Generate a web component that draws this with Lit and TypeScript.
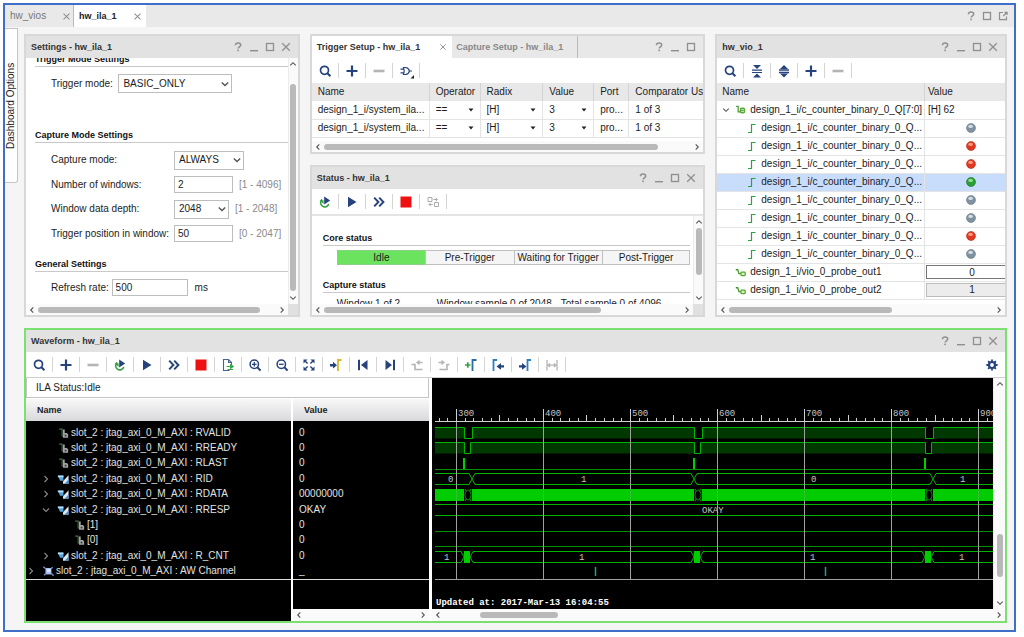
import { LitElement, html, svg, css, nothing, TemplateResult } from "lit";
import { customElement, state } from "lit/decorators.js";
import { classMap } from "lit/directives/class-map.js";

type Glyph = ReturnType<typeof svg>;

const NAVY = "#27437d";
const GREY = "#8f8f8f";
const PALE = "#b4b4b4";

const GLYPHS: Record<string, Glyph> = {
  help: svg`<path d="M4.4 5.2C4.4 3.7 5.5 3 7 3s2.7.8 2.7 2.1c0 1.7-2.6 1.7-2.6 3.5" fill="none" stroke=${GREY} stroke-width="1.5"/><rect x="6.3" y="9.6" width="1.6" height="1.6" fill=${GREY}/>`,
  min: svg`<rect x="3" y="10" width="8" height="1.4" fill=${GREY}/>`,
  max: svg`<rect x="3.5" y="3.5" width="7" height="7" fill="none" stroke=${GREY} stroke-width="1.3"/>`,
  close: svg`<path d="M3.2 3.2l7.6 7.6M10.8 3.2l-7.6 7.6" stroke=${GREY} stroke-width="1.3"/>`,
  float: svg`<path d="M7 3.5H3.5v7.2h7V7.5M8.5 3.3h2.6v2.6M11 3.3L7.2 7" fill="none" stroke=${GREY} stroke-width="1.2"/>`,
  search: svg`<circle cx="6.5" cy="6.3" r="4" fill="none" stroke=${NAVY} stroke-width="1.7"/><path d="M9.4 9.2l3 3" stroke=${NAVY} stroke-width="2"/>`,
  plus: svg`<path d="M7 1.5v11M1.5 7h11" stroke=${NAVY} stroke-width="2.2"/>`,
  minus: svg`<path d="M1.5 7h11" stroke=${PALE} stroke-width="2.6"/>`,
  gate: svg`<path d="M4.5 3.5h2.2c2.2.2 3.3 1.7 3.8 3.5-.5 1.8-1.6 3.3-3.8 3.5H4.5c1-2.4 1-4.6 0-7zM1.5 5.2h3M1.5 8.8h3M10.5 7H13" fill="none" stroke=${NAVY} stroke-width="1.2"/><path d="M15 11v3.5h-3.5z" fill="#222"/>`,
  rerun: svg`<path d="M4.2 4.4A4.2 4.2 0 1 0 10.8 9" fill="none" stroke="#34a344" stroke-width="1.6"/><path d="M1.6 5.2h4V9z" fill="#34a344"/><path d="M6.2 1.6l6 4-6 4z" fill=${NAVY}/>`,
  play: svg`<path d="M3 1.8L11.5 7 3 12.2z" fill=${NAVY}/>`,
  fast: svg`<path d="M2.2 2.6L6.4 7l-4.2 4.4M7.2 2.6L11.4 7l-4.2 4.4" fill="none" stroke=${NAVY} stroke-width="2"/>`,
  stop: svg`<rect x="1.5" y="1.5" width="11" height="11" fill="#ee1111"/>`,
  swap: svg`<path d="M2 2.5h4v4H2zM8.5 7.5h4v4h-4zM7.5 4.5h3.8M9.8 2.8l1.6 1.7-1.6 1.7M6.8 9.5H3M4.6 7.8L3 9.5l1.6 1.7" fill="none" stroke="#ababab"/>`,
  exporter: svg`<path d="M8.5 12.5H2.5v-11h5l3 3V7M7.5 1.5v3h3" fill="none" stroke="#4a6290" stroke-width="1.1"/><path d="M5.5 8.5h4.5M9.5 6.5l3 2-3 2zM12 11.5H6.5" fill="#34a344" stroke="#34a344"/>`,
  zoomIn: svg`<circle cx="6.3" cy="6.3" r="4.2" fill="none" stroke=${NAVY} stroke-width="1.5"/><path d="M9.3 9.3l3.3 3.3" stroke=${NAVY} stroke-width="2"/><path d="M4 6.3h4.6M6.3 4v4.6" stroke=${NAVY} stroke-width="1.3"/>`,
  zoomOut: svg`<circle cx="6.3" cy="6.3" r="4.2" fill="none" stroke=${NAVY} stroke-width="1.5"/><path d="M9.3 9.3l3.3 3.3" stroke=${NAVY} stroke-width="2"/><path d="M4 6.3h4.6" stroke=${NAVY} stroke-width="1.3"/>`,
  fit: svg`<path d="M1.5 1.5h4L1.5 5.5zM12.5 1.5v4L8.5 1.5zM1.5 12.5v-4l4 4zM12.5 12.5h-4l4-4z" fill=${NAVY}/><path d="M3 3l2.6 2.6M11 3L8.4 5.6M3 11l2.6-2.6M11 11L8.4 8.4" stroke=${NAVY} stroke-width="1.4"/>`,
  toCursor: svg`<path d="M1 6h3V3.8L8 7.2l-4 3.4V8.4H1z" fill=${NAVY}/><path d="M9 13V2h3.5" fill="none" stroke="#d9b52c" stroke-width="1.8"/>`,
  first: svg`<path d="M3 1.8v10.4" stroke=${NAVY} stroke-width="2"/><path d="M11.5 2v10L5 7z" fill=${NAVY}/>`,
  last: svg`<path d="M11 1.8v10.4" stroke=${NAVY} stroke-width="2"/><path d="M2.5 2v10L9 7z" fill=${NAVY}/>`,
  prevEdge: svg`<path d="M1.5 6.5h3.5v5h7.5" fill="none" stroke=${PALE} stroke-width="1.6"/><path d="M12.5 5.3H9.5V7.3L6 4.5l3.5-2.8v2h3z" fill=${PALE}/>`,
  nextEdge: svg`<path d="M12.5 6.5h-2.5v5H2.5" fill="none" stroke=${PALE} stroke-width="1.6"/><path d="M1.5 5.3h3V7.3L8 4.5 4.5 1.7v2h-3z" fill=${PALE}/>`,
  addMarker: svg`<path d="M1 7h5.5M3.8 4.2v5.6" stroke="#34a344" stroke-width="1.7"/><path d="M8.5 13V2H12.5" fill="none" stroke="#2d6aa8" stroke-width="1.8"/>`,
  prevMarker: svg`<path d="M2.5 13V2H6" fill="none" stroke="#2d7fc0" stroke-width="1.8"/><path d="M13 7.2h-3V5L5.5 8.4l4.5 3.4V9.6h3z" fill=${NAVY}/>`,
  nextMarker: svg`<path d="M9.5 13V2H13" fill="none" stroke="#2d7fc0" stroke-width="1.8"/><path d="M1 7.2h3V5l4.5 3.4L4 11.8V9.6H1z" fill=${NAVY}/>`,
  span: svg`<path d="M2 2v10.5M12 2v10.5M3 7.2h8M5 5.4L3.2 7.2 5 9M9 5.4l1.8 1.8L9 9" fill="none" stroke=${PALE} stroke-width="1.3"/>`,
  collapse: svg`<path d="M2 6.2h10M2 8.5h10" stroke=${NAVY} stroke-width="1.2"/><path d="M3 1h8L7 5zM3 13.5h8l-4-4z" fill=${NAVY}/>`,
  expand: svg`<path d="M2 6h10M2 8.5h10" stroke=${NAVY} stroke-width="1.5"/><path d="M3 5h8L7 1zM3 9.5h8l-4 4z" fill=${NAVY}/>`,
  gear: svg`<circle cx="7" cy="7" r="3" fill="none" stroke=${NAVY} stroke-width="2.2"/><path d="M7 1.4v2.2M7 10.4v2.2M1.4 7h2.2M10.4 7h2.2M3.1 3.1l1.5 1.5M9.4 9.4l1.5 1.5M10.9 3.1L9.4 4.6M4.6 9.4l-1.5 1.5" stroke=${NAVY} stroke-width="1.8"/>`,
  up: svg`<path d="M3.8 8.5L7 5.5l3.2 3" fill="none" stroke="#555" stroke-width="1.3"/>`,
  down: svg`<path d="M3.8 5.5L7 8.5l3.2-3" fill="none" stroke="#555" stroke-width="1.3"/>`,
  left: svg`<path d="M8.5 3.8L5.5 7l3 3.2" fill="none" stroke="#555" stroke-width="1.3"/>`,
  right: svg`<path d="M5.5 3.8L8.5 7l-3 3.2" fill="none" stroke="#555" stroke-width="1.3"/>`,
  treeRight: svg`<path d="M5.5 4L8.5 7l-3 3" fill="none" stroke="#8a8a8a" stroke-width="1.1"/>`,
  treeDown: svg`<path d="M4 5.5L7 8.5l3-3" fill="none" stroke="#8a8a8a" stroke-width="1.1"/>`,
  comboArrow: svg`<path d="M3.8 5.4L7 8.5l3.2-3.1" fill="none" stroke="#555" stroke-width="1.4"/>`,
  cellArrow: svg`<path d="M4.5 5.6h5L7 8.4z" fill="#222"/>`,
  edge: svg`<path d="M3 11.5H6.5V3.5H10.5" fill="none" stroke="#2fa043" stroke-width="1.2"/>`,
  busOut: svg`<path d="M1.5 3h2.5v7h3.5" fill="none" stroke="#3f9a2c" stroke-width="1.5"/><rect x="6" y="4.5" width="7" height="7.5" rx="2.5" fill="#5aa838"/><path d="M8 7.2h3.5M8 9.6h3.5" stroke="#dff2d2" stroke-width="1.1"/>`,
  netOut: svg`<path d="M1 3.5h2.5l1.5 5h3" fill="none" stroke="#3f9a2c" stroke-width="1.6"/><rect x="7.5" y="6.5" width="5.5" height="4.5" rx="1" fill="#d9f0c8" stroke="#5aa52f" stroke-width="1.6"/>`,
  waveNet: svg`<path d="M2.5 2.5h3.5v8H8" fill="none" stroke="#4c6a4c" stroke-width="1.3"/><path d="M7 3h2v4h2.5l1.5 1.5V12.5H7z" fill="#a2a2a2"/><path d="M9 9h2v2H9z" fill="#3a3a3a"/>`,
  waveBus: svg`<path d="M1 3h6.5v6H3.5z" fill="#56a3dc"/><path d="M1 3h6.5v2H1z" fill="#b7def6"/><path d="M7 9.5l6.5-7V12.5H7z" fill="#d8e8f4"/><path d="M9 12.5l4.5-5v5z" fill="#3f88c5"/>`,
  waveGroup: svg`<path d="M4 3.5h7v7.5H4z" fill="#a9bdf0"/><path d="M1.5 2l2.5 2M12.5 2.5L11 4M2.5 12L4 10.5M11 10l2.5 2.5" stroke="#7c92d0" stroke-width="1.6"/><path d="M6 5h4v3H6z" fill="#dfe7ff"/>`,
};

const icon = (name: string) =>
  html`<svg class="icon" viewBox="0 0 14 14" aria-hidden="true">${GLYPHS[name]}</svg>`;

const windowButtons = (names: string[]) => html`
  <span class="winbtns">
    ${names.map((n) => html`<button class="winbtn" aria-label=${n}>${icon(n)}</button>`)}
  </span>
`;

const toolbar = (names: string[], end: string | null = null) => html`
  <div class="toolbar">
    ${names.map((n) => html`<button class="tool" aria-label=${n}>${icon(n)}</button>`)}
    ${end ? html`<button class="tool end" aria-label=${end}>${icon(end)}</button>` : nothing}
  </div>
`;

/** A scroll bar whose thumb is given as three proportions: before, thumb, after. */
const scrollbar = (dir: "h" | "v", parts: [number, number, number] | null) => html`
  <div class=${classMap({ bar: true, [dir]: true })}>
    ${icon(dir === "h" ? "left" : "up")}
    <div class="track">
      ${parts
        ? html`<span style="flex:${parts[0]}"></span><span class="thumb" style="flex:${parts[1]}"></span
            ><span style="flex:${parts[2]}"></span>`
        : nothing}
    </div>
    ${icon(dir === "h" ? "right" : "down")}
  </div>
`;

const PANEL_BUTTONS = ["help", "min", "max", "close"];

interface Signal {
  name: string;
  value: string;
  icon: string;
  level: "group" | "signal" | "bit";
  open?: boolean;
}

const PREFIX = "slot_2 : jtag_axi_0_M_AXI : ";
const SIGNALS: Signal[] = [
  { name: PREFIX + "RVALID", value: "0", icon: "waveNet", level: "signal" },
  { name: PREFIX + "RREADY", value: "0", icon: "waveNet", level: "signal" },
  { name: PREFIX + "RLAST", value: "0", icon: "waveNet", level: "signal" },
  { name: PREFIX + "RID", value: "0", icon: "waveBus", level: "signal", open: false },
  { name: PREFIX + "RDATA", value: "00000000", icon: "waveBus", level: "signal", open: false },
  { name: PREFIX + "RRESP", value: "OKAY", icon: "waveBus", level: "signal", open: true },
  { name: "[1]", value: "0", icon: "waveNet", level: "bit" },
  { name: "[0]", value: "0", icon: "waveNet", level: "bit" },
  { name: PREFIX + "R_CNT", value: "0", icon: "waveBus", level: "signal", open: false },
  { name: PREFIX + "AW Channel", value: "_", icon: "waveGroup", level: "group", open: false },
];

const LEDS = ["grey", "red", "red", "green", "grey", "grey", "red", "grey"];
const LED_COLOURS: Record<string, string[]> = {
  grey: ["#d3dde4", "#7e919f", "#6b7d8b"],
  red: ["#ff9a80", "#e03820", "#b83020"],
  green: ["#8be08b", "#28a035", "#187024"],
};

const led = (c: string) => html`
  <svg class="led" viewBox="0 0 10 10" role="img" aria-label=${c}>
    <circle cx="5" cy="5" r="4.5" fill=${LED_COLOURS[c][1]} stroke=${LED_COLOURS[c][2]} stroke-width=".6" />
    <ellipse cx="4.6" cy="3.4" rx="2.3" ry="1.6" fill=${LED_COLOURS[c][0]} />
  </svg>
`;

const END = 2400;
const BURSTS = [32, 262, 493];

const digital = (y: number, gap: number) => {
  let line = `M3 ${y}`;
  for (const b of BURSTS) line += `H${b + 0.5}V${y + 11}H${b + gap + 0.5}V${y}`;
  line += `H${END}`;
  return svg`<path d="${line}V${y + 11}H3Z" fill="#003800"/><path d=${line} fill="none" class="sig"/>
    ${BURSTS.map((b) => svg`<rect x=${b + 1} y=${y} width=${gap - 1} height="10" fill="#000"/>`)}`;
};

const waveform = () => svg`
  <path class="axis" d="M3 43.5H${END}"/>
  ${Array.from({ length: 80 }, (_, i) => {
    const x = Math.round(6.6 + i * 8.7) + 0.5;
    const rest = (i + 8) % 10;
    const len = rest === 0 ? 12 : rest === 5 ? 6 : 3;
    return svg`<path class="axis" d="M${x} ${43 - len}V43"/>`;
  })}
  ${digital(49.5, 8)}
  ${digital(64.5, 6)}
  <path class="sig dim" d="M3 91.5H${END}"/>
  ${BURSTS.map((b) => svg`<path class="sig pulse" d="M${b} 80V91"/>`)}
  <path class="sig" d="M3 95.5H37L43 106.5H259L265 95.5H498L504 106.5H${END}M3 106.5H37L43 95.5H259L265 106.5H498L504 95.5H${END}"/>
  <path class="sig" d="M3 126.5H${END}M3 137.5H${END}"/>
  <path class="sig dim" d="M3 153.5H${END}M3 168.5H${END}"/>
  <path class="sig" d="M3 173.5H${END}M3 184.5H${END}"/>
  ${BURSTS.map(
    (b) => svg`<rect x=${b - 4} y="173" width="15" height="12" fill="#000"/>
      <path class="sig" d="M${b - 4} 173.5h1l3 5.5l-3 5.5h-1M${b + 11} 173.5h-2l-3 5.5l3 5.5h2"/>
      <rect x=${b} y="173" width="6" height="12" fill="#00cc00"/>`
  )}
  <path d="M163.5 189V198M393.5 189V198" stroke="#2a9a8c" stroke-width="1.5"/>
  ${Array.from({ length: 8 }, (_, i) => svg`<path class="guide" d="M${24.5 + i * 87} 44V201"/>`)}
  <path class="guide" d="M3 201.5H${END}"/>
  <rect x="3" y="111" width=${END} height="12" fill="#00cc00"/>
  ${Array.from({ length: 8 }, (_, i) => svg`<path class="guide faint" d="M${24.5 + i * 87} 111V123"/>`)}
  ${BURSTS.map(
    (b) => svg`<rect x=${b} y="111" width="8" height="12" fill="#000"/>
      <path class="sig" d="M${b + 1} 111L${b + 2.5} 113.5M${b + 7} 111L${b + 5.5} 113.5M${b + 1} 123L${b + 2.5} 120.5M${b + 7} 123L${b + 5.5} 120.5"/>
      <ellipse class="sig dim" cx=${b + 4} cy="117" rx="3" ry="5"/>`
  )}
  ${Array.from({ length: 8 }, (_, i) => svg`<text x=${26 + i * 87} y="38">${300 + i * 100}</text>`)}
  <text x="16" y="104">0</text><text x="149" y="104">1</text><text x="379" y="104">0</text><text x="528" y="104">1</text>
  <text x="270" y="135">OKAY</text>
  <text x="12" y="182">1</text><text x="147" y="182">1</text><text x="378" y="182">1</text><text x="527" y="182">1</text>
  <text x="4" y="227" class="note">Updated at: 2017-Mar-13 16:04:55</text>
`;

@customElement("app-root")
export class AppRoot extends LitElement {
  @state() private selected = 3;

  static styles = css`
    :host {
      display: flex;
      box-sizing: border-box;
      min-height: 100vh;
      padding: 3px 8px 5px 3px;
      background: #fff;
      color: #1c1c1c;
      font: 10px/12px "Liberation Sans", Arial, sans-serif;
    }
    * { box-sizing: border-box; }
    button, input, select { font: inherit; color: inherit; margin: 0; border-radius: 0; }
    button { border: 0; padding: 0; background: none; }
    select { appearance: none; }
    .icon { width: 14px; height: 14px; display: block; flex: none; overflow: visible; }
    .frame {
      flex: 1; min-width: 0; display: flex; flex-direction: column;
      border: 2px solid #3f6fc8; background: #f5f5f5;
    }
    .tabs { display: flex; height: 22px; background: #e9e9e9; padding-right: 3px; align-items: stretch; }
    .tab {
      display: flex; align-items: center; justify-content: space-between;
      width: 68px; padding: 0 1px 0 5px; color: #777;
    }
    .tab.on { width: 73px; padding-right: 3px; background: #fff; color: #222; border-left: 1px solid #bbb; }
    .tab .icon { width: 11px; height: 11px; }
    .bold { font-weight: bold; font-size: 9px; }
    .winbtns { display: flex; margin-left: auto; align-items: center; }
    .winbtn { width: 16px; display: flex; justify-content: center; }
    .main { flex: 1; display: flex; gap: 6px; padding-right: 7px; min-height: 0; }
    .side {
      width: 13px; height: 155px; margin-top: 1px; background: #fff; flex: none;
      writing-mode: vertical-rl; transform: rotate(180deg);
      border: 1px solid #c4c4c4; border-right: 0; border-radius: 3px 0 0 0;
      text-align: center;
    }
    .work { flex: 1; min-width: 0; display: flex; flex-direction: column; gap: 11px; padding: 7px 0; }
    .top { display: grid; grid-template-columns: 276fr 396fr 292fr; column-gap: 10px; height: 283px; }
    .middle { display: grid; grid-template-rows: 120px 1fr; row-gap: 11px; min-height: 0; min-width: 0; }
    .panel {
      display: flex; flex-direction: column; min-width: 0; min-height: 0;
      border: 2px solid #d8d8d8; background: #fff;
    }
    .panel.active { border-color: #7be070; flex: 1; }
    .title {
      display: flex; align-items: center; flex: none; height: 22px; margin: 0;
      padding: 0 4px 0 5px; background: #e2e2e2; color: #333;
    }
    .title h2 { margin: 0; font-size: 9px; }
    .title.tabbed { padding-left: 0; align-items: stretch; background: #e8e8e8; }
    .subtab { display: flex; align-items: center; gap: 18px; padding: 0 4px 0 5px; white-space: nowrap; }
    .subtab.on { background: #fff; }
    .subtab.off { color: #888; border-right: 1px solid #bbb; padding: 0 14px 0 4px; }
    .subtab .icon { width: 10px; height: 10px; }
    .toolbar { display: flex; align-items: center; flex: none; height: 25px; }
    .tool {
      width: 27px; height: 15px; display: flex; align-items: center; justify-content: center;
      border-right: 1px solid #d4d4d4;
    }
    .tool.end { margin-left: auto; border: 0; }
    .pane { flex: 1; min-height: 0; display: flex; }
    .view { flex: 1; min-width: 0; overflow: hidden; }
    .foot { display: flex; flex: none; height: 11px; }
    .corner { width: 10px; background: #e0e0e0; }
    .bar { display: flex; flex: 1; align-items: center; background: #fafafa; }
    .bar .icon { width: 12px; height: 12px; }
    .bar.v { flex: none; width: 10px; flex-direction: column; border-left: 1px solid #ececec; }
    .track { display: flex; flex: 1; align-self: stretch; align-items: center; }
    .v .track { flex-direction: column; }
    .thumb { background: #b9b9b9; border-radius: 3px; height: 6px; }
    .v .thumb { width: 6px; height: auto; }

    .form { margin: -5px 0 0 9px; }
    .form h3, .status h3 {
      margin: 0; font-size: 9px; line-height: 12px; height: 14px; border-bottom: 1px solid #c9c9c9; color: #111;
    }
    .field { display: flex; align-items: center; padding-left: 16px; }
    .field.first { margin: 7px 0 36px; }
    .field.rate { margin-top: 7px; }
    .fields { display: grid; grid-template-rows: repeat(4, 1fr); height: 98px; margin: 5px 0 12px; }
    .fields label { width: 123px; }
    .field label { white-space: nowrap; }
    .combo { display: grid; align-items: center; }
    .combo > * { grid-area: 1 / 1; }
    .combo .icon { justify-self: end; pointer-events: none; }
    .field select { width: 100%; height: 19px; padding: 0 4px; border: 1px solid #bdbdbd; background: #fff; }
    .field input { height: 17px; width: 59px; padding: 0 3px; border: 1px solid #bdbdbd; background: #fff; }
    .field.rate input { width: 76px; }
    .w114 { width: 114px; }
    .w70 { width: 70px; }
    .w55 { width: 55px; }
    .hint { color: #8a8a8a; margin-left: 6px; white-space: nowrap; }
    .unit { margin-left: 7px; }

    table { border-collapse: collapse; table-layout: fixed; width: 100%; }
    th, td { padding: 0 5px; height: 18px; font-weight: normal; text-align: left; overflow: hidden; white-space: nowrap; }
    th { background: #e8e8e8; border-right: 1px solid #d4d4d4; }
    td { border-right: 1px solid #e4e4e4; border-bottom: 1px solid #e4e4e4; }
    th:last-child, td:last-child { border-right: 0; }
    .trig th, .trig td { padding: 0 0 0 6px; }
    .trig select { width: 100%; height: 14px; border: 0; padding: 0; background: transparent; }
    .trig .combo .icon { margin-right: 2px; }

    .status { padding: 16px 3px 0 11px; }
    .steps { display: grid; grid-template-columns: repeat(4, 1fr); margin: 4px 0 14px 14px; }
    .step {
      height: 15px; line-height: 14px; text-align: center; white-space: nowrap;
      border: 1px solid #c0c0c0; border-right: 0; background: #f5f5f5;
    }
    .step:last-child { border-right: 1px solid #c0c0c0; }
    .step.now { background: #6be35f; border-color: #8ccf86; }
    .samples { display: grid; grid-template-columns: 100px 124px 1fr; margin: 5px 0 0 14px; white-space: nowrap; }
    .line { border-top: 2px solid #e4e4e4; }

    .vio th, .vio td { padding: 0 0 0 5px; }
    .vio th:last-child, .vio td:last-child { padding-left: 3px; }
    .vio td.mid:last-child { padding-left: 12px; }
    .vio tr.sel td { background: #c8dcfc; }
    .item { display: flex; align-items: center; gap: 4px; }
    .item.bit { padding-left: 23px; gap: 2px; }
    .item.out { padding-left: 13px; }
    .item.root { margin-left: -5px; }
    .item.root .icon:first-child { width: 12px; height: 12px; margin: 0 -1px 0 3px; }
    .item.out .icon, .item.root .icon + .icon { width: 11px; height: 11px; }
    .led { width: 10px; height: 10px; display: block; margin: 0 auto; }
    .vio td.probe:last-child { padding-left: 1px; }
    .probe input, .probe button {
      display: block; width: 100%; height: 14px; text-align: center; padding: 0 0 0 12px;
      border: 1px solid #777; border-right: 0; background: #fff;
    }
    .probe button { border-color: #bbb; background: #ececec; }

    .wavebody {
      flex: 1; min-height: 0; display: grid; grid-template-columns: 403fr 564fr 12px;
      border-top: 1px solid #cfcfcf;
    }
    .left { display: flex; flex-direction: column; min-width: 0; }
    .ila { height: 20px; padding: 0 9px; line-height: 19px; border: 1px solid #c4c4c4; border-top: 0; }
    .cols { flex: 1; display: grid; grid-template-columns: 265fr 136fr; gap: 2px; margin-top: 1px; min-height: 0; }
    .col { display: flex; flex-direction: column; min-width: 0; background: #000; color: #e2e2e2; }
    .colhead { flex: none; height: 22px; line-height: 22px; padding: 0 11px; color: #222; background: linear-gradient(#f8f8f8, #d9d9dc); }
    .rows {
      display: grid; grid-template-rows: repeat(10, 1fr); flex: none; height: 159px; padding-top: 4px;
      border-bottom: 1px solid #ddd;
    }
    .row { display: flex; align-items: center; white-space: nowrap; }
    .row.signal { padding-left: 15px; }
    .row.bit { padding-left: 31px; }
    .twist { width: 14px; margin-right: 2px; flex: none; display: flex; margin-left: -2px; }
    .twist + .icon { width: 12px; height: 12px; margin: 0 2px; }
    .row.value { padding-left: 6px; }
    .col .bar { margin-top: auto; flex: none; height: 12px; }
    .right { display: flex; flex-direction: column; min-width: 0; padding-left: 3px; }
    .plot { flex: 1; min-height: 0; width: 100%; display: block; background: #000; font: 9px "Liberation Mono", monospace; }
    .right .bar { flex: none; height: 12px; margin-right: -12px; }
    .vend { padding-bottom: 12px; display: flex; }
    .vend .bar.v { width: 12px; }
    .sig { stroke: #00b400; fill: none; }
    .dim { stroke: #009200; }
    .pulse { stroke: #00d000; stroke-width: 2; }
    .axis { stroke: #d0d0d0; }
    .guide { stroke: #a0a0a0; }
    .faint { stroke-opacity: .35; }
    .plot text { fill: #c4c4c4; }
    .plot .note { fill: #fff; font-weight: bold; }
  `;

  private combo(id: string, width: string, value: string) {
    return html`<span class="combo ${width}">
      <select id=${id}><option>${value}</option></select>${icon("comboArrow")}
    </span>`;
  }

  private cellCombo(label: string, value: string) {
    return html`<td>
      <span class="combo"><select aria-label=${label}><option>${value}</option></select>${icon("cellArrow")}</span>
    </td>`;
  }

  private panelTitle(text: string) {
    return html`<header class="title"><h2>${text}</h2>${windowButtons(PANEL_BUTTONS)}</header>`;
  }

  private settings(): TemplateResult {
    return html`<section class="panel">
      ${this.panelTitle("Settings - hw_ila_1")}
      <div class="pane">
        <div class="view">
          <form class="form">
            <h3>Trigger Mode Settings</h3>
            <div class="field first">
              <label for="tmode">Trigger mode:&nbsp;&nbsp;</label>${this.combo("tmode", "w114", "BASIC_ONLY")}
            </div>
            <h3>Capture Mode Settings</h3>
            <div class="fields">
              <div class="field"><label for="cmode">Capture mode:</label>${this.combo("cmode", "w70", "ALWAYS")}</div>
              <div class="field">
                <label for="nwin">Number of windows:</label><input id="nwin" value="2" /><span class="hint">[1 - 4096]</span>
              </div>
              <div class="field">
                <label for="depth">Window data depth:</label>${this.combo("depth", "w55", "2048")}<span class="hint">[1 - 2048]</span>
              </div>
              <div class="field">
                <label for="pos">Trigger position in window:</label><input id="pos" value="50" /><span class="hint">[0 - 2047]</span>
              </div>
            </div>
            <h3>General Settings</h3>
            <div class="field rate">
              <label for="rate">Refresh rate:&nbsp;</label><input id="rate" value="500" /><span class="unit">ms</span>
            </div>
          </form>
        </div>
        ${scrollbar("v", [14, 209, 1])}
      </div>
      <div class="foot">${scrollbar("h", [0, 222, 16])}<span class="corner"></span></div>
    </section>`;
  }

  private trigger(): TemplateResult {
    const row = () => html`<tr>
      <td>design_1_i/system_ila...</td>
      ${this.cellCombo("Operator", "==")}${this.cellCombo("Radix", "[H]")}${this.cellCombo("Value", "3")}
      <td>pro...</td>
      <td>1 of 3</td>
    </tr>`;
    return html`<section class="panel">
      <header class="title tabbed">
        <span class="subtab on bold">Trigger Setup - hw_ila_1 ${icon("close")}</span>
        <span class="subtab off bold">Capture Setup - hw_ila_1</span>
        ${windowButtons(["help", "min", "max"])}
      </header>
      ${toolbar(["search", "plus", "minus", "gate"])}
      <div class="view">
        <table class="trig">
          <colgroup>
            <col style="width:30%" /><col style="width:13%" /><col style="width:16%" />
            <col style="width:13%" /><col style="width:9%" /><col style="width:19%" />
          </colgroup>
          <thead><tr><th>Name</th><th>Operator</th><th>Radix</th><th>Value</th><th>Port</th><th>Comparator Usage</th></tr></thead>
          <tbody>${row()}${row()}</tbody>
        </table>
      </div>
      <div class="foot">${scrollbar("h", [0, 334, 33])}</div>
    </section>`;
  }

  private status(): TemplateResult {
    return html`<section class="panel">
      ${this.panelTitle("Status - hw_ila_1")}
      ${toolbar(["rerun", "play", "fast", "stop", "swap"])}
      <div class="pane line">
        <div class="view status">
          <h3>Core status</h3>
          <div class="steps">
            <span class="step now">Idle</span><span class="step">Pre-Trigger</span>
            <span class="step">Waiting for Trigger</span><span class="step">Post-Trigger</span>
          </div>
          <h3>Capture status</h3>
          <div class="samples">
            <span>Window 1 of 2</span><span>Window sample 0 of 2048</span><span>Total sample 0 of 4096</span>
          </div>
        </div>
        ${scrollbar("v", [0, 48, 18])}
      </div>
      <div class="foot">${scrollbar("h", [0, 277, 80])}<span class="corner"></span></div>
    </section>`;
  }

  private vio(): TemplateResult {
    return html`<section class="panel">
      ${this.panelTitle("hw_vio_1")}
      ${toolbar(["search", "collapse", "expand", "plus", "minus"])}
      <div class="view">
        <table class="vio">
          <colgroup><col style="width:72%" /><col style="width:28%" /></colgroup>
          <thead><tr><th>Name</th><th>Value</th></tr></thead>
          <tbody>
            <tr>
              <td><div class="item root">${icon("down")}${icon("busOut")}<span>design_1_i/c_counter_binary_0_Q[7:0]</span></div></td>
              <td>[H] 62</td>
            </tr>
            ${LEDS.map(
              (c, i) => html`<tr class=${classMap({ sel: i === this.selected })} @click=${() => (this.selected = i)}>
                <td><div class="item bit">${icon("edge")}<span>design_1_i/c_counter_binary_0_Q...</span></div></td>
                <td class="mid">${led(c)}</td>
              </tr>`
            )}
            <tr>
              <td><div class="item out">${icon("netOut")}<span>design_1_i/vio_0_probe_out1</span></div></td>
              <td class="probe"><input aria-label="probe_out1" value="0" /></td>
            </tr>
            <tr>
              <td><div class="item out">${icon("netOut")}<span>design_1_i/vio_0_probe_out2</span></div></td>
              <td class="probe"><button>1</button></td>
            </tr>
          </tbody>
        </table>
      </div>
      <div class="foot">${scrollbar("h", [0, 164, 102])}</div>
    </section>`;
  }

  private wave(): TemplateResult {
    return html`<section class="panel active">
      ${this.panelTitle("Waveform - hw_ila_1")}
      ${toolbar(
        ["search", "plus", "minus", "rerun", "play", "fast", "stop", "exporter", "zoomIn", "zoomOut", "fit", "toCursor",
          "first", "last", "prevEdge", "nextEdge", "addMarker", "prevMarker", "nextMarker", "span"],
        "gear"
      )}
      <div class="wavebody">
        <div class="left">
          <div class="ila">ILA Status:Idle</div>
          <div class="cols">
            <div class="col">
              <div class="colhead bold">Name</div>
              <div class="rows">
                ${SIGNALS.map(
                  (s) => html`<div class="row ${s.level}">
                    <span class="twist">${s.open === undefined ? nothing : icon(s.open ? "treeDown" : "treeRight")}</span>
                    ${icon(s.icon)}<span>${s.name}</span>
                  </div>`
                )}
              </div>
            </div>
            <div class="col">
              <div class="colhead bold">Value</div>
              <div class="rows">${SIGNALS.map((s) => html`<div class="row value">${s.value}</div>`)}</div>
              ${scrollbar("h", null)}
            </div>
          </div>
        </div>
        <div class="right">
          <svg class="plot" role="img" aria-label="Waveform">${waveform()}</svg>
          ${scrollbar("h", [36, 78, 435])}
        </div>
        <div class="vend">${scrollbar("v", [144, 43, 20])}</div>
      </div>
    </section>`;
  }

  render() {
    return html`<div class="frame">
      <nav class="tabs">
        <span class="tab">hw_vios ${icon("close")}</span>
        <span class="tab on"><span class="bold">hw_ila_1</span> ${icon("close")}</span>
        ${windowButtons(["help", "max", "float"])}
      </nav>
      <div class="main">
        <button class="side">Dashboard Options</button>
        <div class="work">
          <div class="top">
            ${this.settings()}
            <div class="middle">${this.trigger()}${this.status()}</div>
            ${this.vio()}
          </div>
          ${this.wave()}
        </div>
      </div>
    </div>`;
  }
}
